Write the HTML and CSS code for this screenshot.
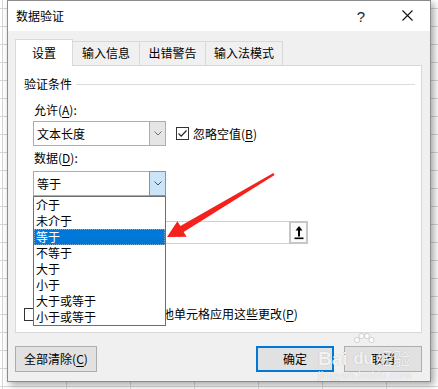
FILE: index.html
```html
<!DOCTYPE html>
<html lang="zh-CN">
<head>
    <meta charset="UTF-8">
    <title>数据验证</title>
    <link rel="stylesheet" href="styles.css">
</head>
<body>

    <!-- Dialoogvenster -->
    <div class="dialog">
        <div class="titlebar">
            <span class="title">数据验证</span>
            <span class="caption-btn help">?</span>
            <span class="caption-btn close">
                <svg width="11" height="11" viewBox="0 0 11 11"><path d="M0.5 0.5 L10.5 10.5 M10.5 0.5 L0.5 10.5" stroke="#111" stroke-width="1.1" fill="none"/></svg>
            </span>
        </div>

        <div class="dialog-body">
            <div class="tabs">
                <div class="tab active">设置</div>
                <div class="tab">输入信息</div>
                <div class="tab">出错警告</div>
                <div class="tab">输入法模式</div>
            </div>

            <div class="panel">
                <div class="group-title"><span>验证条件</span><span class="group-line"></span></div>

                <div class="criteria">
                    <div class="label first">允许(<u>A</u>):</div>
                    <div class="row">
                        <div class="combo">
                            <span class="combo-text">文本长度</span>
                            <span class="combo-btn">
                                <svg width="8" height="5" viewBox="0 0 8 5"><path d="M0.5 0.5 L4 4 L7.5 0.5" stroke="#707070" fill="none"/></svg>
                            </span>
                        </div>
                        <div class="check">
                            <span class="box">
                                <svg width="11" height="11" viewBox="0 0 11 11"><path d="M1.5 5.5 L4.2 8.2 L9.5 2.5" stroke="#222" stroke-width="1.2" fill="none"/></svg>
                            </span>
                            <span>忽略空值(<u>B</u>)</span>
                        </div>
                    </div>

                    <div class="label">数据(<u>D</u>):</div>
                    <div class="combo-wrap">
                        <div class="combo open">
                            <span class="combo-text">等于</span>
                            <span class="combo-btn">
                                <svg width="8" height="5" viewBox="0 0 8 5"><path d="M0.5 0.5 L4 4 L7.5 0.5" stroke="#505050" fill="none"/></svg>
                            </span>
                        </div>
                        <ul class="listbox">
                            <li>介于</li>
                            <li>未介于</li>
                            <li class="selected">等于</li>
                            <li>不等于</li>
                            <li>大于</li>
                            <li>小于</li>
                            <li>大于或等于</li>
                            <li>小于或等于</li>
                        </ul>
                    </div>

                    <div class="refedit">
                        <span class="ref-btn">
                            <svg width="10" height="14" viewBox="0 0 10 14">
                                <polygon points="5,0 1.5,4.5 8.5,4.5" fill="#000"/>
                                <rect x="4" y="4" width="2" height="6.5" fill="#000"/>
                                <rect x="0.5" y="11.5" width="9" height="1.6" fill="#000"/>
                            </svg>
                        </span>
                    </div>
                </div>

                <div class="check apply">
                    <span class="box"></span>
                    <span>对有同样设置的所有其他单元格应用这些更改(<u>P</u>)</span>
                </div>
            </div>

            <div class="buttons">
                <button class="btn clear">全部清除(<u>C</u>)</button>
                <span class="spacer"></span>
                <button class="btn default">确定</button>
                <button class="btn">取消</button>
            </div>
        </div>
    </div>

    <!-- Rode pijl -->
    <svg class="arrow" width="438" height="389" viewBox="0 0 438 389">
        <polygon points="167,237 177.4,221.2 180.4,226 273.4,173 274.6,175 183.6,232 186.6,236.8" fill="#f5211c"/>
    </svg>

    <!-- Watermerk -->
    <div class="watermark">
        <div class="wm-top">
            <span class="wm-bai">Bai</span>
            <span class="wm-paw">
                <svg width="22" height="18" viewBox="0 0 22 18">
                    <circle cx="4" cy="7" r="2.6"/>
                    <circle cx="8.5" cy="3" r="2.6"/>
                    <circle cx="14" cy="3" r="2.6"/>
                    <circle cx="18.5" cy="7" r="2.6"/>
                </svg>
                <span class="wm-du">du</span>
            </span>
            <span class="wm-jy">经验</span>
        </div>
        <div class="wm-url">jingyan.baidu.com</div>
    </div>

</body>
</html>
```

FILE: styles.css
```css
* {
    box-sizing: border-box;
}

body {
    margin: 0;
    width: 438px;
    height: 389px;
    overflow: hidden;
    position: relative;
    font-family: "Noto Sans CJK SC", "Microsoft YaHei", sans-serif;
    font-size: 12px;
    color: #000;
    background-color: #fff;
    background-image:
        linear-gradient(#d6d6d6 1px, transparent 1px),
        linear-gradient(90deg, #d6d6d6 1px, transparent 1px);
    background-size: 64px 18px;
    background-position: 2px 8px;
}

/* Dialoog */
.dialog {
    margin-left: 7px;
    width: 424px;
    height: 382px;
    border: 1px solid #8c8c8c;
    background-color: #f0f0f0;
    box-shadow: 3px 3px 7px rgba(0, 0, 0, 0.35);
}

.titlebar {
    display: flex;
    align-items: center;
    height: 30px;
    background-color: #fff;
    padding-left: 8px;
}

.title {
    flex: 1;
    line-height: 16px;
    margin-top: -1px;
}

.caption-btn {
    width: 46px;
    height: 30px;
    display: flex;
    align-items: center;
    justify-content: center;
}

.help {
    font-family: "Liberation Sans", Arial, sans-serif;
    font-size: 15px;
    color: #222;
}

.close svg {
    margin-top: -1px;
}

.dialog-body {
    height: 350px;
    padding: 8px 8px 0 7px;
}

/* Tabbladen */
.tabs {
    display: flex;
    align-items: flex-end;
    height: 26px;
}

.tab {
    height: 24px;
    line-height: 22px;
    text-align: center;
    border: 1px solid #d9d9d9;
    border-bottom: none;
    background-color: #f0f0f0;
    margin-left: -1px;
    position: relative;
}

.tab:nth-child(1) { width: 58px; margin-left: 0; }
.tab:nth-child(2) { width: 68px; }
.tab:nth-child(3) { width: 67px; }
.tab:nth-child(4) { width: 78px; }

.tab.active {
    height: 27px;
    line-height: 26px;
    background-color: #fff;
    margin-bottom: -1px;
    z-index: 2;
}

.panel {
    height: 268px;
    background-color: #fff;
    border: 1px solid #d9d9d9;
    padding-left: 8px;
    position: relative;
}

.group-title {
    display: flex;
    align-items: center;
    margin-top: 10px;
    height: 16px;
    line-height: 16px;
}

.group-line {
    flex: 1;
    height: 1px;
    background-color: #dcdcdc;
    margin: 1px 6px 0 4px;
}

.criteria {
    padding-left: 9px;
}

.label {
    height: 16px;
    line-height: 16px;
    padding-left: 1px;
    margin-top: 4px;
}

.label.first {
    margin-top: 10px;
}

u {
    text-decoration-thickness: 1px;
    text-underline-offset: 2px;
}

.row {
    display: flex;
    align-items: center;
    margin-top: 3px;
}

/* Keuzelijsten */
.combo {
    display: flex;
    width: 133px;
    height: 25px;
    border: 1px solid #adadad;
    background-color: #fff;
}

.combo-text {
    flex: 1;
    line-height: 23px;
    padding-left: 3px;
}

.combo-btn {
    width: 17px;
    margin: -1px -1px -1px 0;
    border: 1px solid #adadad;
    background-color: #e5e5e5;
    display: flex;
    align-items: center;
    justify-content: center;
}

.combo.open .combo-btn {
    border-color: #5a9fe2;
    background-color: #cce4f7;
}

.combo-wrap {
    position: relative;
    margin-top: 5px;
}

.listbox {
    list-style-type: none;
    margin: 0;
    padding: 0;
    position: absolute;
    top: 25px;
    left: 0;
    width: 133px;
    border: 1px solid #6e6e6e;
    background-color: #fff;
    z-index: 5;
}

.listbox li {
    height: 16px;
    line-height: 16px;
    padding-left: 2px;
}

.listbox li.selected {
    background-color: #0078d7;
    color: #fff;
    outline: 1px dotted #7fa6cc;
    outline-offset: -1px;
}

/* Selectievakjes */
.check {
    display: flex;
    align-items: center;
    line-height: 16px;
    margin-left: 10px;
}

.box {
    width: 13px;
    height: 13px;
    border: 1px solid #333;
    background-color: #fff;
    margin-right: 4px;
    display: flex;
    align-items: center;
    justify-content: center;
}

.check.apply {
    margin-left: 0;
    margin-top: 62px;
    height: 16px;
}

.check.apply .box {
    margin-right: 5px;
}

/* Verwijzingsveld */
.refedit {
    display: flex;
    justify-content: flex-end;
    width: 275px;
    height: 23px;
    margin-top: 25px;
    border: 1px solid #cfcfcf;
    background-color: #fff;
}

.ref-btn {
    width: 19px;
    margin: -1px -1px -1px 0;
    border: 2px solid #c6c6c6;
    background-color: #fbfbfb;
    display: flex;
    align-items: center;
    justify-content: center;
}

/* Knoppen */
.buttons {
    display: flex;
    margin-top: 13px;
    gap: 10px;
}

.spacer {
    flex: 1;
}

.btn {
    font-family: inherit;
    font-size: 12px;
    color: #000;
    height: 26px;
    width: 78px;
    padding: 0;
    border: 1px solid #adadad;
    background-color: #e1e1e1;
    line-height: 16px;
}

.btn.clear {
    width: 82px;
}

.btn.default {
    border: 2px solid #0078d7;
}

/* Rode pijl */
.arrow {
    position: absolute;
    left: 0;
    top: 0;
    z-index: 10;
}

/* Watermerk */
.watermark {
    position: absolute;
    left: 318px;
    top: 333px;
    z-index: 11;
    color: rgba(255, 255, 255, 0.85);
    font-family: "Liberation Sans", Arial, sans-serif;
    text-shadow: 0 0 1px rgba(0, 0, 0, 0.25);
}

.wm-top {
    display: flex;
    align-items: flex-end;
    height: 34px;
}

.wm-bai {
    font-size: 19px;
    font-weight: bold;
    line-height: 16px;
}

.wm-paw {
    display: flex;
    flex-direction: column;
    align-items: center;
    margin-left: 5px;
}

.wm-paw svg circle {
    fill: rgba(255, 255, 255, 0.8);
    stroke: rgba(0, 0, 0, 0.15);
}

.wm-du {
    font-size: 17px;
    font-weight: bold;
    line-height: 16px;
}

.wm-jy {
    font-family: "Noto Sans CJK SC", sans-serif;
    font-size: 17px;
    line-height: 18px;
    margin-left: 2px;
}

.wm-url {
    font-size: 11px;
    line-height: 12px;
    margin-top: 2px;
    letter-spacing: 0.3px;
}
```
